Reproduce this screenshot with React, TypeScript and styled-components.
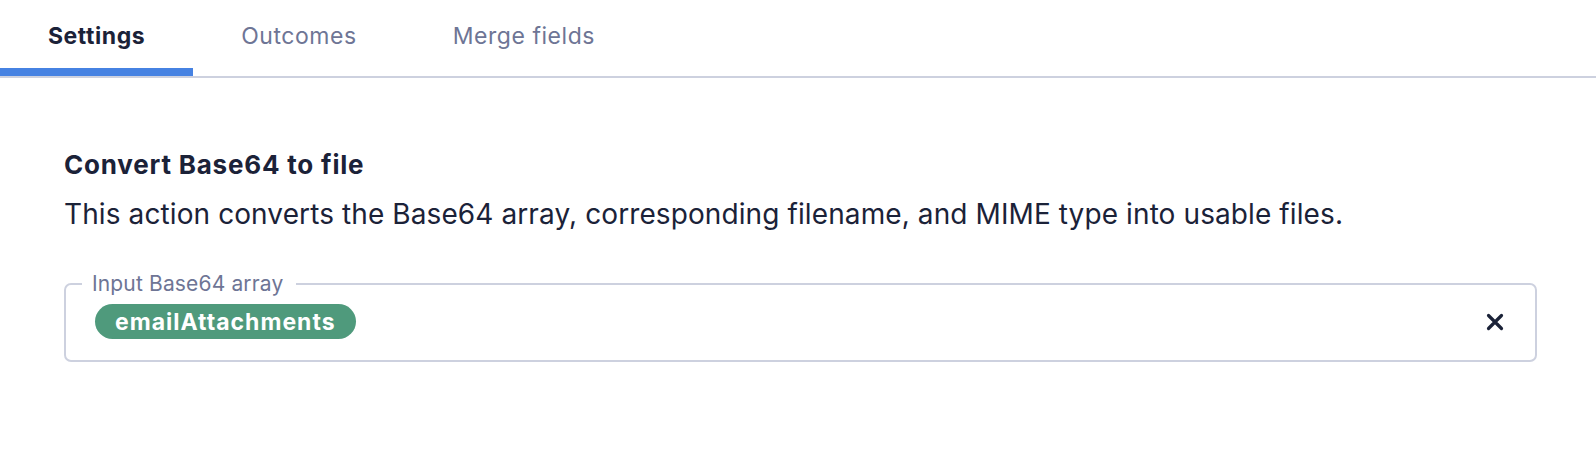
import React from 'react';
import styled, { createGlobalStyle } from 'styled-components';

const GlobalStyle = createGlobalStyle`
  * {
    margin: 0;
    padding: 0;
    box-sizing: border-box;
  }
  html, body {
    width: 100%;
    height: 100%;
    background-color: #ffffff;
  }
  body {
    font-family: Inter, 'Noto Sans', sans-serif;
    color: #1b2238;
  }
`;

const Page = styled.div`
  width: 100%;
  min-height: 100vh;
  background: #ffffff;
`;

const TabBar = styled.div`
  display: flex;
  align-items: stretch;
  height: 78px;
  border-bottom: 2px solid #cdd1df;
`;

const Tab = styled.div<{ $active?: boolean }>`
  display: flex;
  align-items: center;
  padding: 3px 48px 0;
  font-size: 23px;
  letter-spacing: 0.55px;
  font-weight: ${p => (p.$active ? 700 : 400)};
  color: ${p => (p.$active ? '#1b2238' : '#6e7595')};
  border-bottom: 8px solid ${p => (p.$active ? '#4682e2' : 'transparent')};
  cursor: pointer;
`;

const Content = styled.div`
  padding: 70px 59px 0 64px;
  display: flex;
  flex-direction: column;
`;

const Title = styled.h2`
  font-size: 26px;
  letter-spacing: 0.8px;
  font-weight: 700;
  line-height: 34px;
  color: #1b2238;
`;

const Description = styled.p`
  margin-top: 14px;
  font-size: 28px;
  letter-spacing: 0.1px;
  line-height: 36px;
  color: #1b2238;
`;

const Field = styled.fieldset`
  margin-top: 40px;
  border: 2px solid #cdd1df;
  border-radius: 7px;
  padding: 8px 28px 21px 16px;
  display: flex;
  align-items: center;
`;

const Legend = styled.legend`
  padding: 0 13px 0 10px;
  font-size: 21px;
  letter-spacing: 0.15px;
  line-height: 24px;
  color: #6e7595;
`;

const Chip = styled.span`
  display: inline-flex;
  align-items: center;
  height: 35px;
  margin-left: 13px;
  padding: 0 20px;
  border-radius: 18px;
  background: #4f9a7c;
  color: #ffffff;
  font-size: 23px;
  letter-spacing: 1px;
  font-weight: 700;
`;

const Spacer = styled.div`
  flex: 1;
`;

const ClearButton = styled.button`
  border: none;
  background: none;
  display: flex;
  align-items: center;
  justify-content: center;
  width: 24px;
  height: 24px;
  cursor: pointer;
  color: #1b2238;
`;

function App() {
  return (
    <>
      <GlobalStyle />
      <Page>
        <TabBar>
          <Tab $active>Settings</Tab>
          <Tab>Outcomes</Tab>
          <Tab>Merge fields</Tab>
        </TabBar>
        <Content>
          <Title>Convert Base64 to file</Title>
          <Description>
            This action converts the Base64 array, corresponding filename, and MIME type into usable files.
          </Description>
          <Field>
            <Legend>Input Base64 array</Legend>
            <Chip>emailAttachments</Chip>
            <Spacer />
            <ClearButton aria-label="Clear">
              <svg width="18" height="18" viewBox="0 0 18 18" fill="none">
                <path d="M2.5 2.5L15.5 15.5M15.5 2.5L2.5 15.5" stroke="currentColor" strokeWidth="3.2" strokeLinecap="round" />
              </svg>
            </ClearButton>
          </Field>
        </Content>
      </Page>
    </>
  );
}

export default App;
